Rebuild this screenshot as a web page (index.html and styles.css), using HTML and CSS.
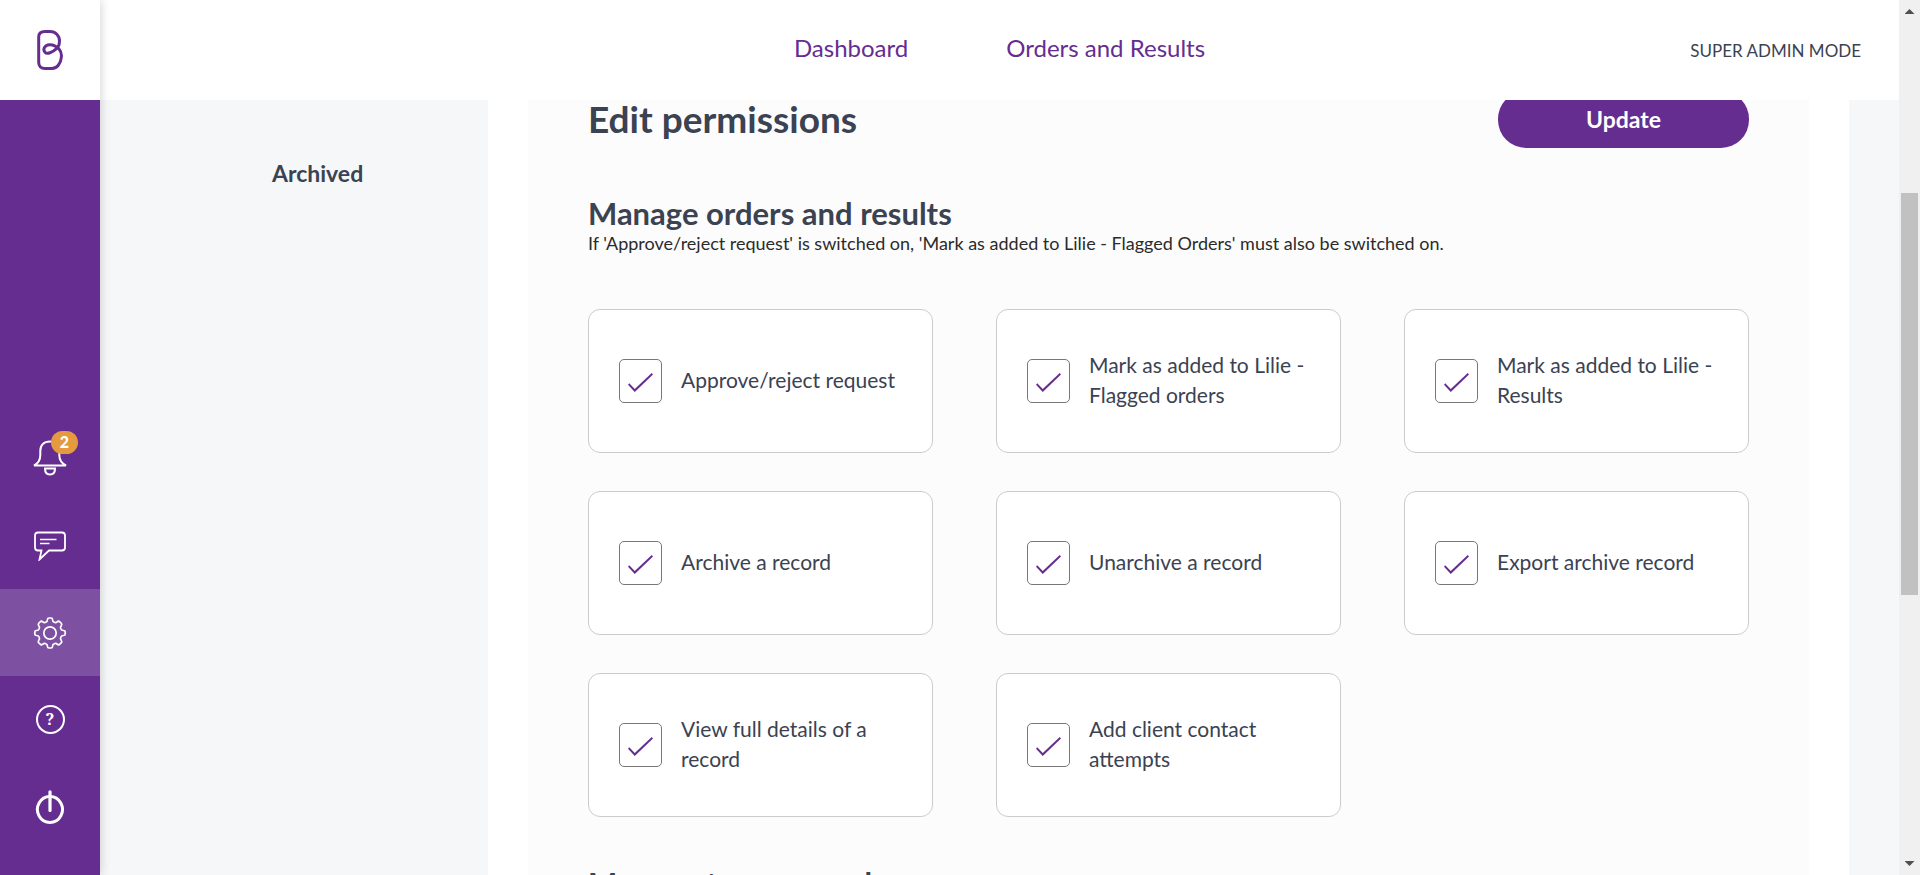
FILE: index.html
```html
<!DOCTYPE html>
<html lang="en">
<head>
<meta charset="utf-8">
<title>Edit permissions</title>
<link rel="stylesheet" href="styles.css">
</head>
<body>
<div class="app">
  <aside class="sidebar">
    <a class="logo" href="#" aria-label="Home">
      <svg width="26" height="42" viewBox="0 0 26 42" fill="none" stroke="#662d91" stroke-width="3">
        <path d="M20.800 18.600C15 23.800 10 25.500 8 23.200C5.500 20.500 7.500 16 12.500 15.700C17.500 15.500 19.500 17.300 22 20C24.200 22.500 24.800 25 24.300 28.500C23.800 34.500 20 39.300 15 39.500H8C4 39.500 1.700 37 1.700 33.500V8C1.700 4.500 4 2.500 8 2.500H13C18.500 2.500 22.500 6.500 22.500 12C22.500 15 21.800 17.300 20.800 18.600Z"/>
      </svg>
    </a>
    <nav class="side-nav" aria-label="Tools">
      <a class="side-link" href="#" aria-label="Notifications">
        <span class="bell">
          <svg width="34" height="42" viewBox="0 0 34 42" fill="none" stroke="#fff" stroke-width="2">
            <path d="M1 27.500C5 25.500 7.300 23 7.300 17V13C7.300 7 11 3.500 17 3.500S26.300 7 26.300 13V17C26.300 23 29 25.500 33 27.500Z"/>
            <path d="M12 30.500H22C22 34.500 20 36.500 17 36.500S12 34.500 12 30.500Z"/>
          </svg>
          <span class="badge">2</span>
        </span>
      </a>
      <a class="side-link" href="#" aria-label="Messages">
        <svg width="32" height="30" viewBox="0 0 32 30" fill="none" stroke="#fff" stroke-width="1.800">
          <path d="M4 1.500H28Q31 1.500 31 4.500V16.500Q31 19.500 28 19.500H15L5.500 28.500L7.500 19.500H4Q1 19.500 1 16.500V4.500Q1 1.500 4 1.500Z"/>
          <path d="M6 8.500H22.500M6 12.500H15.500" stroke-width="1.400"/>
        </svg>
      </a>
      <a class="side-link active" href="#" aria-label="Settings" aria-current="page">
        <svg width="34" height="34" viewBox="-17 -17 34 34" fill="none" stroke="#fff" stroke-width="1.700" stroke-linejoin="round">
          <path d="M-2.500 -13.500Q-2.500 -15 -1 -15H1Q2.500 -15 2.500 -13.500Q2.500 -11.500 4.200 -10.800Q6 -10 7.200 -11.200Q8.800 -12.300 9.800 -11.200L11.200 -9.800Q12.300 -8.800 11.200 -7.200Q10 -6 10.800 -4.200Q11.500 -2.500 13.500 -2.500Q15.200 -2.500 15.200 -1V1Q15.200 2.500 13.500 2.500Q11.500 2.500 10.800 4.200Q10 6 11.200 7.200Q12.300 8.800 11.200 9.800L9.800 11.200Q8.800 12.300 7.200 11.200Q6 10 4.200 10.800Q2.500 11.500 2.500 13.500Q2.500 15 1 15H-1Q-2.500 15 -2.500 13.500Q-2.500 11.500 -4.200 10.800Q-6 10 -7.200 11.200Q-8.800 12.300 -9.800 11.200L-11.200 9.800Q-12.300 8.800 -11.200 7.200Q-10 6 -10.800 4.200Q-11.500 2.500 -13.500 2.500Q-15.200 2.500 -15.200 1V-1Q-15.200 -2.500 -13.500 -2.500Q-11.500 -2.500 -10.800 -4.200Q-10 -6 -11.200 -7.200Q-12.300 -8.800 -11.200 -9.800L-9.800 -11.200Q-8.800 -12.300 -7.200 -11.200Q-6 -10 -4.200 -10.800Q-2.500 -11.500 -2.500 -13.500Z"/>
          <circle r="6.200"/>
        </svg>
      </a>
      <a class="side-link" href="#" aria-label="Help"><span class="help">?</span></a>
      <a class="side-link" href="#" aria-label="Log out">
        <svg width="30" height="34" viewBox="0 0 30 34" fill="none" stroke="#fff">
          <path d="M15 6.500A12.500 13 0 1 1 14.900 6.500" stroke-width="3"/>
          <path d="M15 1.800V20.500" stroke-width="3.200" stroke-linecap="round"/>
        </svg>
      </a>
    </nav>
  </aside>

  <div class="page">
    <header class="topbar">
      <nav class="main-nav" aria-label="Main">
        <a href="#">Dashboard</a>
        <a href="#">Orders and Results</a>
      </nav>
      <span class="mode">SUPER ADMIN MODE</span>
    </header>
    <div class="body">
      <aside class="filters"><a href="#">Archived</a></aside>
      <main class="content">
        <form class="panel">
          <div class="panel-head">
            <h1>Edit permissions</h1>
            <button class="update" type="button">Update</button>
          </div>
          <section>
            <h2>Manage orders and results</h2>
            <p class="note">If 'Approve/reject request' is switched on, 'Mark as added to Lilie - Flagged Orders' must also be switched on.</p>
            <div class="cards">
              <label class="card"><input type="checkbox" checked><span>Approve/reject request</span></label>
              <label class="card"><input type="checkbox" checked><span>Mark as added to Lilie - Flagged orders</span></label>
              <label class="card"><input type="checkbox" checked><span>Mark as added to Lilie - Results</span></label>
              <label class="card"><input type="checkbox" checked><span>Archive a record</span></label>
              <label class="card"><input type="checkbox" checked><span>Unarchive a record</span></label>
              <label class="card"><input type="checkbox" checked><span>Export archive record</span></label>
              <label class="card"><input type="checkbox" checked><span>View full details of a record</span></label>
              <label class="card"><input type="checkbox" checked><span>Add client contact attempts</span></label>
            </div>
          </section>
          <section>
            <h2>Manage team record</h2>
          </section>
        </form>
      </main>
    </div>
  </div>

  <div class="scrollbar" aria-hidden="true">
    <span class="arrow up"></span>
    <span class="track"><span class="thumb"></span></span>
    <span class="arrow down"></span>
  </div>
</div>
</body>
</html>
```
FILE: styles.css
```css
* { box-sizing: border-box; }
body { margin: 0; font-family: Lato, "Open Sans", sans-serif; color: #3b4252; background: #fff; }
a { color: inherit; text-decoration: none; }
h1, h2, p { margin: 0; }

.app { display: flex; height: 100vh; overflow: hidden; }

.sidebar {
  flex: 0 0 100px; display: flex; flex-direction: column; z-index: 2;
  background: #662d91; box-shadow: 0 0 10px rgba(0, 0, 0, .2);
}
.logo { display: flex; align-items: center; justify-content: center; height: 100px; background: #fff; }
.side-nav { display: flex; flex-direction: column; margin-top: auto; padding-bottom: 25px; }
.side-link { display: flex; align-items: center; justify-content: center; height: 87px; color: #fff; }
.side-link.active { background: #7e50a2; }
.bell { position: relative; display: flex; }
.badge {
  position: absolute; top: -7px; left: 18px; width: 27px; height: 23px;
  border-radius: 12px; background: #e59a40;
  font-size: 16px; font-weight: 900; line-height: 22px; text-align: center;
}
.help {
  width: 29px; height: 29px; border: 2px solid #fff; border-radius: 50%;
  font: 700 16px/25px "Noto Serif", "Liberation Serif", serif; text-align: center;
}

.page { flex: 1; min-width: 0; display: flex; flex-direction: column; }
.topbar {
  display: grid; grid-template-columns: 1fr auto 1fr; align-items: center;
  flex: 0 0 100px; padding: 0 38px; z-index: 1; background: #fff;
}
.main-nav { grid-column: 2; display: flex; gap: 98px; padding-bottom: 6px; font-size: 24px; color: #662d91; }
.mode { justify-self: end; font-size: 17px; }

.body { flex: 1; min-height: 0; display: flex; overflow: hidden; background: #f5f7f9; }
.filters { flex: 0 0 388px; padding: 58px 0 0 172px; font-size: 23px; font-weight: 700; line-height: 30px; }
.content { flex: 1; margin-right: 50px; padding: 0 40px; background: #fff; }
.panel { margin-top: -9px; padding: 0 60px; background: #fcfcfc; }
.panel-head { display: flex; align-items: center; justify-content: space-between; margin-bottom: 47px; }
h1 { padding-bottom: 2px; font-size: 37px; line-height: 44px; }
h2 { font-size: 31px; line-height: 36px; }
.update {
  width: 251px; height: 57px; border: 0; border-radius: 28px; padding: 0 0 2px;
  background: #662d91; color: #fff; font: 700 23px/28px Lato, sans-serif;
}
.note { font-size: 18px; line-height: 24px; color: #2b2b2b; }
.cards { display: grid; grid-template-columns: repeat(3, 1fr); gap: 38px 63px; margin: 54px 0 48px; }
.card {
  display: flex; align-items: center; gap: 19px; min-height: 144px; padding: 0 20px 0 30px;
  border: 1px solid #ccc; border-radius: 12px; background: #fff;
  font-size: 21px; line-height: 30px;
}
.card span { padding-bottom: 2px; }
.card input {
  appearance: none; flex: 0 0 43px; height: 44px; margin: 0; padding-top: 3px; display: grid; place-items: center;
  border: 1px solid #777; border-radius: 5px; background: #fff;
}
.card input:checked::before {
  content: ""; width: 25px; height: 20px; background: #662d91;
  clip-path: polygon(0 61%, 5% 54%, 27% 82%, 95% 3%, 100% 10%, 27% 98%);
}

.scrollbar { flex: 0 0 21px; display: flex; flex-direction: column; align-items: center; background: #f0f0f0; }
.arrow { flex: 0 0 24px; width: 10px; background: #505050; clip-path: polygon(0 14px, 5px 9px, 10px 14px); }
.arrow.down { clip-path: polygon(0 10px, 5px 15px, 10px 10px); }
.track { flex: 1; align-self: stretch; display: grid; grid-template-rows: 169fr 402fr 256fr; padding: 0 2px; }
.thumb { grid-row: 2; background: #c1c1c1; }
```
